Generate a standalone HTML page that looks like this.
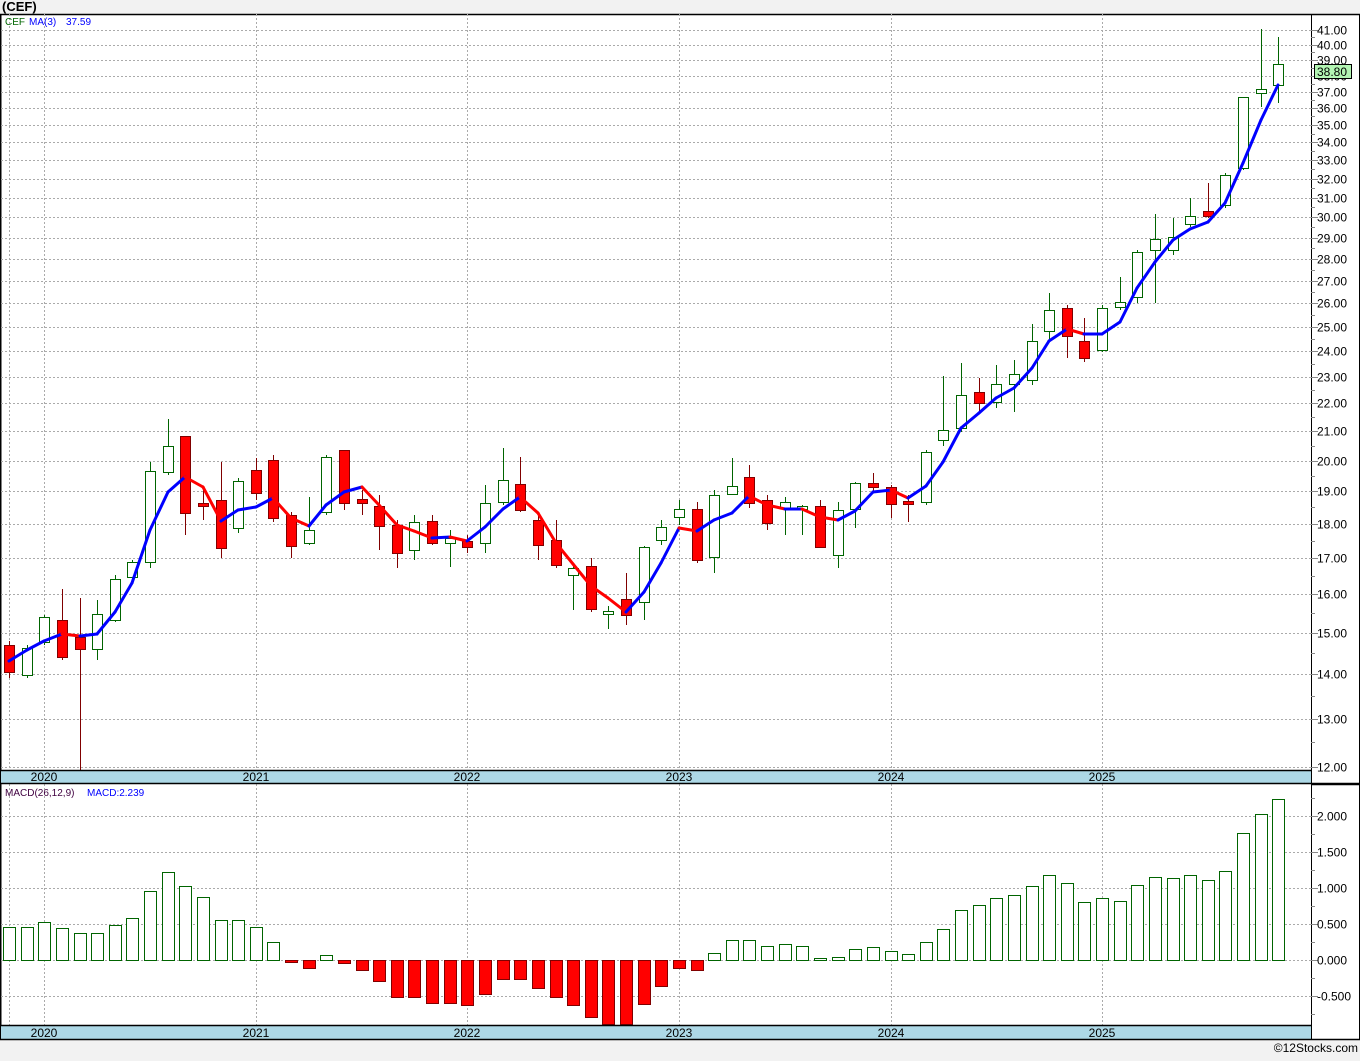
<!DOCTYPE html>
<html><head><meta charset="utf-8"><style>
html,body{margin:0;padding:0;background:#f2f2f2;}
body{width:1360px;height:1056px;overflow:hidden;font-family:"Liberation Sans",sans-serif;}
svg text{font-family:"Liberation Sans",sans-serif;}
</style></head><body>
<svg id="s" width="1360" height="1056" xmlns="http://www.w3.org/2000/svg"></svg>
<script>
var S=document.getElementById('s');var h='';
function r(x,y,w,hh,f,st,sw){h+='<rect x="'+x+'" y="'+y+'" width="'+w+'" height="'+hh+'" fill="'+f+'"'+(st?' stroke="'+st+'" stroke-width="'+(sw||1)+'"':'')+'/>';}
function l(x1,y1,x2,y2,c,w,d){h+='<line x1="'+x1+'" y1="'+y1+'" x2="'+x2+'" y2="'+y2+'" stroke="'+c+'" stroke-width="'+(w||1)+'"'+(d?' stroke-dasharray="'+d+'"':'')+'/>';}
function t(x,y,s,c,sz,a,fw){h+='<text x="'+x+'" y="'+y+'" fill="'+c+'" font-size="'+sz+'"'+(a?' text-anchor="'+a+'"':'')+(fw?' font-weight="'+fw+'"':'')+'>'+s+'</text>';}
t(2,11,'(CEF)','#000',13,null,'bold');
r(0,14,1360,1025,'#fff');
l(0,14.5,1360,14.5,'#000',1.5);
l(0.5,14,0.5,1039,'#000',2);
l(1359.5,14,1359.5,1039,'#000',1);
l(1311.5,14,1311.5,1039,'#000',1);
function py(p){return 30+599.8*Math.log(41/p);}
for(var p=12;p<=41;p++){var y=Math.round(py(p))+0.5;l(1,y,1311,y,'#aaa',1,'2,2');l(1311,y,1318,y,'#888',1);t(1317,y+4,p.toFixed(2),'#000',12);
 var ym=Math.round(py(p+0.5))+0.5; if(p<41){l(1311,ym,1315,ym,'#888',1);}}
var yrs=[[44,'2020'],[256,'2021'],[467,'2022'],[679,'2023'],[891,'2024'],[1102,'2025']];
var vg=[9].concat(yrs.map(function(a){return a[0]}));
vg.forEach(function(x){l(x+0.5,14,x+0.5,770,'#aaa',1,'2,2');l(x+0.5,784,x+0.5,1025,'#aaa',1,'2,2');});
[2,1.5,1,0.5,0,-0.5].forEach(function(v){var y=960-72*v+0.5;l(1,y,1311,y,'#aaa',1,'2,2');l(1311,y,1318,y,'#888',1);t(1317,y+4,(v<0?'-':'')+Math.abs(v).toFixed(3),'#000',12);});
for(var v=-0.75;v<2.3;v+=0.25){var y=Math.round(960-72*v)+0.5;l(1311,y,1315,y,'#888',1);}
var C=[[641,678,645,672,0],[645,678,648,675,1],[615,645,617,642,1],[589,660,620,657,0],[598,770,637,649,0],[600,660,614,649,1],[575,622,579,620,1],[560,580,562,577,1],[462,568,471,562,1],[419,475,446,472,1],[436,535,436,513,0],[490,520,503,506,0],[462,558,500,548,0],[478,533,481,528,1],[458,500,470,493,0],[455,522,460,518,0],[512,558,515,546,0],[497,545,530,543,1],[455,515,457,512,1],[450,510,450,503,0],[490,515,499,503,0],[495,550,506,526,0],[520,568,525,553,0],[515,560,522,550,1],[515,545,521,543,0],[530,567,538,543,1],[535,553,541,547,0],[485,553,503,543,1],[448,505,480,502,1],[457,512,484,510,0],[515,560,520,545,0],[520,568,540,565,0],[565,610,568,575,1],[558,612,566,609,0],[606,629,611,614,1],[573,625,599,615,0],[546,620,547,602,1],[520,545,527,540,1],[500,525,509,517,1],[502,563,509,560,0],[490,573,495,557,1],[458,494,486,494,1],[465,508,477,503,0],[495,530,500,523,0],[497,535,502,508,1],[505,535,506,509,1],[500,548,506,547,0],[502,568,510,555,1],[482,528,483,509,1],[473,492,483,487,0],[485,518,487,504,0],[495,522,501,504,0],[450,505,452,502,1],[376,446,430,440,1],[363,432,395,428,1],[378,412,392,403,0],[365,408,384,402,1],[360,412,374,384,1],[324,385,341,380,1],[293,340,310,331,1],[305,358,308,336,0],[318,362,341,358,0],[305,352,308,350,1],[277,310,302,307,1],[250,303,252,297,1],[214,303,239,250,1],[218,255,237,250,1],[198,227,216,224,1],[183,218,211,216,0],[173,208,175,205,1],[97,170,97,168,1],[29,107,89,93,1],[37,103,64,85,1]];
function cx(i){return Math.round(9+17.63*i);}
C.forEach(function(c,i){var x=cx(i);var col=c[4]?'#006400':'#800000';l(x+0.5,c[0],x+0.5,c[1],col,1);
 var bh=Math.max(c[3]-c[2],3);r(x-4.5,c[2]+0.5,10,bh,c[4]?'#fff':'#f00',c[4]?'#006400':'#800000',1);});
var M=[661,650,641,634,636,634,612,583,530,492,477,487,521,510,507,498,518,526,505,492,487,505,525,531,538,537,541,527,509,497,513,543,564,586,598,612,592,563,528,531,520,513,496,505,509,509,517,520,511,492,490,498,486,462,428,413,398,388,368,341,329,334,334,322,288,262,240,229,222,203,163,120,85];
for(var i=1;i<M.length;i++){var c=M[i]>M[i-1]?'#f00':'#00f';h+='<line x1="'+cx(i-1)+'" y1="'+M[i-1]+'" x2="'+cx(i)+'" y2="'+M[i]+'" stroke="'+c+'" stroke-width="3" stroke-linecap="round"/>';}
var D=[927,927,922,928,933,933,925,918,891,872,886,897,920,920,927,942,962,968,955,963,970,981,997,997,1003,1003,1005,994,979,979,988,997,1005,1017,1024,1024,1004,986,968,970,953,940,940,946,944,946,958,957,949,947,951,954,942,929,910,905,898,895,886,875,883,902,898,901,885,877,878,875,880,871,833,814,799];
D.forEach(function(y,i){var x=cx(i);if(y<960)r(x-5.5,y+0.5,12,960-y,'#fff','#006400',1);else r(x-5.5,960.5,12,y-960,'#f00','#800000',1);});
[[770,783],[1025,1039]].forEach(function(b){r(1,b[0],1310,b[1]-b[0],'#add8e6');l(0,b[0]+0.5,1312,b[0]+0.5,'#000',1.5);l(0,b[1]+0.5,1360,b[1]+0.5,'#000',1.5);
 yrs.forEach(function(a){t(a[0],b[1]-2,a[1],'#000',12,'middle');});});
l(1311,784.5,1360,784.5,'#000',1.5);
t(5,25,'CEF','#060',10);t(29,25,'MA(3)','#00f',10);t(66,25,'37.59','#00f',10);
t(5,796,'MACD(26,12,9)','#400040',10);t(87,796,'MACD:2.239','#00f',10);
r(1314.5,64.5,37,14,'#b3f5b3','#000',1);t(1317,76,'38.80','#000',12);
t(1358,1052,'©12Stocks.com','#000',12,'end');
S.innerHTML=h;
</script>
</body></html>
